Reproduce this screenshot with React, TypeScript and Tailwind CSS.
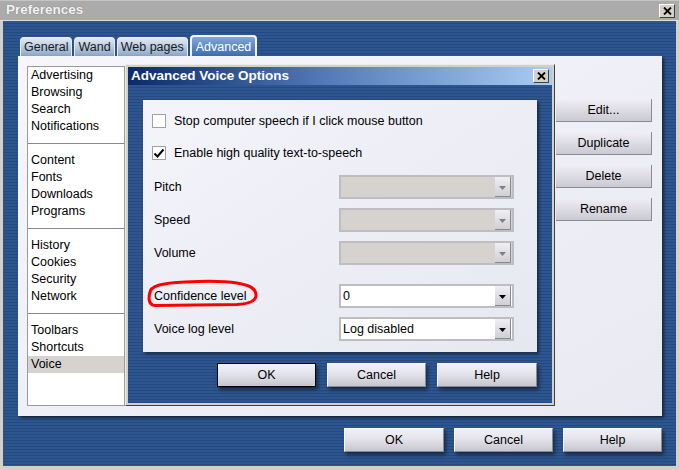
import React from 'react';

const stripes =
  'bg-[repeating-linear-gradient(180deg,#2d5690_0px,#2d5690_2px,#264a7f_2px,#264a7f_3px)]';

function CloseBox() {
  return (
    <div className="w-[16px] h-[14px] bg-[#d4d0c8] border border-t-white border-l-white border-r-[#404040] border-b-[#404040] flex items-center justify-center">
      <svg width="9" height="8" viewBox="0 0 9 8">
        <path d="M1 0.5 L8 7.5 M8 0.5 L1 7.5" stroke="#000" strokeWidth="1.8" />
      </svg>
    </div>
  );
}

function Btn({ label, w, def, shadow }: { label: string; w: string; def?: boolean; shadow?: boolean }) {
  return (
    <div
      className={`${w} h-[24px] flex items-center justify-center text-black bg-gradient-to-b from-[#f3f1f7] via-[#e2e1e9] to-[#c6c6d0] border ${
        def ? 'border-black' : 'border-t-[#f8f8f8] border-l-[#f8f8f8] border-r-[#8a8a92] border-b-[#8a8a92]'
      } ${shadow ? 'shadow-[2px_3px_4px_rgba(0,0,0,0.5)]' : ''}`}
    >
      {label}
    </div>
  );
}

function Combo({ value, disabled }: { value?: string; disabled?: boolean }) {
  return (
    <div
      className={`w-[175px] h-[24px] flex items-center border-2 border-[#bdbdc2] ${
        disabled ? 'bg-[#d6d3ce]' : 'bg-white'
      }`}
    >
      <span className="flex-1 pl-[2px] text-black">{value}</span>
      <div className="w-[16px] h-[20px] mr-[1px] bg-gradient-to-b from-[#f0eff4] to-[#cfcfd6] border-r border-b border-[#8a8a8a] flex items-center justify-center">
        <svg width="7" height="4" viewBox="0 0 7 4" className="mt-[3px]">
          <path d="M0 0 H7 L3.5 4 Z" fill={disabled ? '#808080' : '#000'} />
        </svg>
      </div>
    </div>
  );
}

function CheckBox({ checked }: { checked?: boolean }) {
  return (
    <div className="w-[14px] h-[14px] bg-white border border-[#a0a0a8] flex items-center justify-center">
      {checked && (
        <svg width="12" height="11" viewBox="0 0 12 11">
          <path d="M1.5 5.5 L4.5 8.5 L10.5 1.5" stroke="#000" strokeWidth="2" fill="none" />
        </svg>
      )}
    </div>
  );
}

const groups = [
  ['Advertising', 'Browsing', 'Search', 'Notifications'],
  ['Content', 'Fonts', 'Downloads', 'Programs'],
  ['History', 'Cookies', 'Security', 'Network'],
  ['Toolbars', 'Shortcuts', 'Voice'],
];

export default function App() {
  return (
    <div className="w-[679px] h-[470px] bg-[#d4d0c8] flex flex-col overflow-hidden font-['Liberation_Sans',Arial,sans-serif] text-[12.5px]">
      {/* Title bar */}
      <div className="h-[21px] shrink-0 bg-[#ababab] border-t border-t-[#c4c4c4] border-b border-b-[#dedede] flex items-center justify-between pl-[6px] pr-[4px]">
        <span className="font-bold text-[13.5px] text-[#f4f4f4] [text-shadow:0_0_1px_#6a6a6a]">Preferences</span>
        <CloseBox />
      </div>

      {/* Body */}
      <div className={`flex-1 mx-[3px] mb-[4px] ${stripes} flex flex-col pl-[15px] pr-[14px] pt-[14px]`}>
        {/* Tabs */}
        <div className="h-[21px] flex items-end pl-[2px] gap-[2px]">
          {['General', 'Wand', 'Web pages'].map((t) => (
            <div
              key={t}
              className="h-[19px] px-[3px] rounded-t-[4px] bg-gradient-to-b from-[#e2eaf4] via-[#b9cbe0] to-[#8aa6c8] border border-b-0 border-[#e8eef6] text-[#1a1a1a] flex items-center"
            >
              {t}
            </div>
          ))}
          <div className="h-[21px] px-[4px] rounded-t-[4px] bg-gradient-to-b from-[#7fa8d8] to-[#3f6ead] border-2 border-b-0 border-[#f2f4f8] text-white flex items-start pt-[1px]">
            Advanced
          </div>
        </div>

        {/* Main panel */}
        <div className="h-[360px] bg-gradient-to-br from-[#f6f6fb] to-[#e8e9f2] shadow-[2px_2px_3px_rgba(0,0,0,0.55)] flex items-start pl-[9px] pt-[8px]">
          {/* Section list */}
          <div className="w-[98px] h-[340px] mt-[2px] bg-white border border-[#9a9aa2] flex flex-col">
            {groups.map((g, gi) => (
              <React.Fragment key={gi}>
                {gi > 0 && (
                  <div className="h-[17px] flex items-center">
                    <div className="w-full h-[2px] border-t border-t-[#8a8a8a] border-b border-b-white" />
                  </div>
                )}
                {g.map((item) => (
                  <div
                    key={item}
                    className={`h-[17px] pl-[3px] flex items-center text-black ${item === 'Voice' ? 'bg-[#d6d3ce]' : ''}`}
                  >
                    {item}
                  </div>
                ))}
              </React.Fragment>
            ))}
          </div>

          {/* Advanced Voice Options dialog */}
          <div className="w-[430px] h-[342px] bg-[#d4d0c8] border border-t-[#ececec] border-l-[#ececec] border-r-[#404040] border-b-[#404040] p-[2px] flex flex-col">
            <div className="h-[18px] shrink-0 bg-gradient-to-r from-[#0b2a6c] via-[#5a80bc] to-[#a9cdf2] flex items-center justify-between pl-[3px] pr-[3px]">
              <span className="font-bold text-[13.5px] text-white">Advanced Voice Options</span>
              <CloseBox />
            </div>
            <div className={`flex-1 ${stripes} flex flex-col px-[15px] pt-[15px]`}>
              <div className="h-[252px] bg-gradient-to-br from-[#f4f4fa] to-[#e6e8f1] shadow-[2px_2px_3px_rgba(0,0,0,0.5)] flex flex-col pt-[13px]">
                <div className="h-[16px] flex items-center pl-[9px] gap-[8px]">
                  <CheckBox />
                  <span className="text-black">Stop computer speech if I click mouse button</span>
                </div>
                <div className="h-[16px] mt-[16px] flex items-center pl-[9px] gap-[8px]">
                  <CheckBox checked />
                  <span className="text-black">Enable high quality text-to-speech</span>
                </div>
                {[
                  { label: 'Pitch', mt: 'mt-[14px]', disabled: true },
                  { label: 'Speed', mt: 'mt-[9px]', disabled: true },
                  { label: 'Volume', mt: 'mt-[9px]', disabled: true },
                  { label: 'Confidence level', mt: 'mt-[19px]', value: '0', ring: true },
                  { label: 'Voice log level', mt: 'mt-[9px]', value: 'Log disabled' },
                ].map((r) => (
                  <div key={r.label} className={`${r.mt} h-[24px] flex items-center`}>
                    <div className="w-[196px] pl-[11px] relative text-black">
                      {r.label}
                      {r.ring && (
                        <svg
                          width="116"
                          height="30"
                          viewBox="0 0 116 30"
                          className="absolute left-[2px] top-[-8px] pointer-events-none"
                        >
                          <path
                            d="M5 14 C5 7 16 4 40 3 C60 2 80 2 92 4 C104 6 111 9 111 16 C111 22 104 25 92 25.5 L10 26.5 C4 26 3 20 5 13"
                            stroke="#ff0000"
                            strokeWidth="3"
                            fill="none"
                            strokeLinecap="round"
                          />
                        </svg>
                      )}
                    </div>
                    <Combo value={r.value} disabled={r.disabled} />
                  </div>
                ))}
              </div>
              <div className="mt-[11px] flex justify-end gap-[11px]">
                <Btn label="OK" w="w-[99px]" def shadow />
                <Btn label="Cancel" w="w-[99px]" shadow />
                <Btn label="Help" w="w-[100px]" shadow />
              </div>
            </div>
          </div>

          {/* Right buttons */}
          <div className="ml-[1px] mt-[35px] flex flex-col gap-[10px]">
            {['Edit...', 'Duplicate', 'Delete', 'Rename'].map((b) => (
              <div
                key={b}
                className="w-[96px] h-[23px] flex items-center justify-center text-black bg-gradient-to-b from-[#f1eff5] to-[#cacad3] border-r border-b border-[#8a8a92]"
              >
                {b}
              </div>
            ))}
          </div>
        </div>

        {/* Bottom buttons */}
        <div className="mt-[12px] flex justify-end gap-[10px]">
          <Btn label="OK" w="w-[100px]" shadow />
          <Btn label="Cancel" w="w-[99px]" shadow />
          <Btn label="Help" w="w-[99px]" shadow />
        </div>
      </div>
    </div>
  );
}
